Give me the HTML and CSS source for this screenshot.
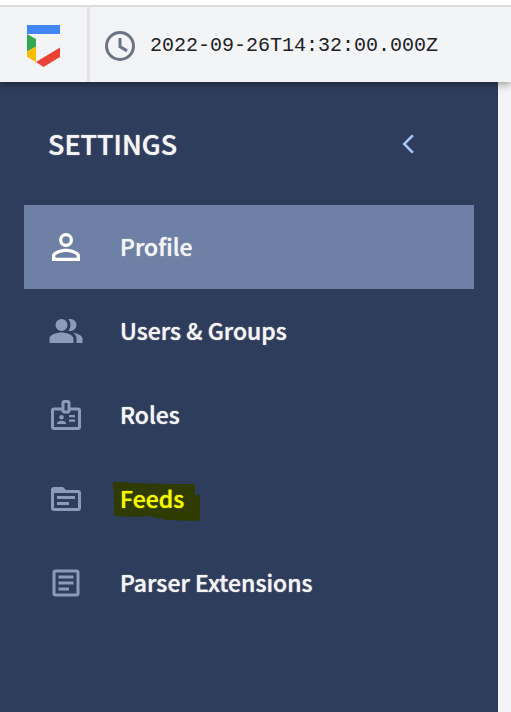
FILE: index.html
```html
<!DOCTYPE html>
<html lang="en">
<head>
<meta charset="utf-8">
<meta name="viewport" content="width=device-width, initial-scale=1">
<title>Settings</title>
<link rel="stylesheet" href="styles.css">
</head>
<body>
<header class="topbar">
  <a class="brand" href="#" aria-label="Home">
    <svg class="logo" viewBox="0 0 33 42" aria-hidden="true">
      <path fill="#4285f4" d="M0 0h33v9H0z"/>
      <path fill="#34a853" d="M0 9l9 5v7.500L0 26.500z"/>
      <path fill="#fbbc04" d="M0 26.500l9-5V37L0 32z"/>
      <path fill="#ea4335" d="M9 37l24-14.500V32L16.500 42z"/>
    </svg>
  </a>
  <div class="clock">
    <svg class="icon" viewBox="0 0 24 24" aria-hidden="true"><path d="M12 2a10 10 0 1 0 0 20 10 10 0 0 0 0-20zm0 18a8 8 0 1 1 0-16 8 8 0 0 1 0 16zM13 6.700H11v6.300l5.200 3.100 1-1.700L13 11.900z"/></svg>
    <time class="stamp" datetime="2022-09-26T14:32:00.000Z">2022-09-26T14:32:00.000Z</time>
  </div>
</header>
<div class="body">
  <aside class="sidebar">
    <div class="heading">
      <h1 class="title">SETTINGS</h1>
      <button class="collapse" type="button" aria-label="Collapse">
        <svg class="icon" viewBox="0 0 24 24" aria-hidden="true"><path d="M15.800 6.900 14.600 5.700 8.300 12l6.300 6.300 1.200-1.200L10.700 12z"/></svg>
      </button>
    </div>
    <nav class="menu">
      <a class="item active" href="#">
        <span class="slot"><svg class="icon large" viewBox="0 0 24 24" aria-hidden="true"><path d="M12 5.900a2.100 2.100 0 1 1 0 4.200 2.100 2.100 0 0 1 0-4.200m0 9c2.970 0 6.100 1.460 6.100 2.100v1.100H5.900V17c0-.64 3.130-2.100 6.100-2.100M12 4a4 4 0 1 0 0 8 4 4 0 0 0 0-8zm0 9c-2.670 0-8 1.340-8 4v3h16v-3c0-2.660-5.330-4-8-4z"/></svg></span>
        <span class="label">Profile</span>
      </a>
      <a class="item" href="#">
        <span class="slot"><svg class="icon" viewBox="0 0 24 24" aria-hidden="true"><path d="M16.670 13.130C18.040 14.060 19 15.320 19 17v3h4v-3c0-2.180-3.570-3.470-6.330-3.870zM15 12a4 4 0 0 0 0-8c-.47 0-.91.1-1.330.24a5.980 5.980 0 0 1 0 7.520c.42.14.86.24 1.330.24zM9 4a4 4 0 1 0 0 8 4 4 0 0 0 0-8zm0 9c-2.670 0-8 1.340-8 4v3h16v-3c0-2.660-5.330-4-8-4z"/></svg></span>
        <span class="label">Users &amp; Groups</span>
      </a>
      <a class="item" href="#">
        <span class="slot"><svg class="icon" viewBox="0 0 24 24" aria-hidden="true"><path fill-rule="evenodd" d="M20 7h-5V4a2 2 0 0 0-2-2h-2a2 2 0 0 0-2 2v3H4a2 2 0 0 0-2 2v11a2 2 0 0 0 2 2h16a2 2 0 0 0 2-2V9a2 2 0 0 0-2-2zM11 4h2v5h-2zm9 16H4V9h5a2 2 0 0 0 2 2h2a2 2 0 0 0 2-2h5z"/><circle cx="9" cy="13.500" r="1.500"/><path d="M6 18v-.5c0-1 1.700-1.700 3-1.700s3 .7 3 1.700v.5zM14 12h4v1.500h-4zM14 15h4v1.500h-4z"/></svg></span>
        <span class="label">Roles</span>
      </a>
      <a class="item" href="#">
        <span class="slot"><svg class="icon" viewBox="0 0 24 24" aria-hidden="true"><path d="M20 6h-8l-2-2H4a2 2 0 0 0-2 2v12a2 2 0 0 0 2 2h16a2 2 0 0 0 2-2V8a2 2 0 0 0-2-2zm0 12H4V8h16zM18 10H6v2h12zM14 14H6v2h8z"/></svg></span>
        <span class="label marked">
          <svg class="marker" viewBox="0 0 87 40" aria-hidden="true"><path d="M0 0h15v1l42 1h25v11h5v26l-32-1-11-2-8-2-13 1-22-1V8H0z"/></svg>
          <span class="marked-text">Feeds</span>
        </span>
      </a>
      <a class="item" href="#">
        <span class="slot"><svg class="icon" viewBox="0 0 24 24" aria-hidden="true"><path d="M19 5v14H5V5h14m0-2H5a2 2 0 0 0-2 2v14a2 2 0 0 0 2 2h14a2 2 0 0 0 2-2V5a2 2 0 0 0-2-2zM14 17H7v-2h7zm3-4H7v-2h10zm0-4H7V7h10z"/></svg></span>
        <span class="label">Parser Extensions</span>
      </a>
    </nav>
  </aside>
</div>
</body>
</html>
```
FILE: styles.css
```css
* { box-sizing: border-box; }

body {
  margin: 0;
  min-height: 100vh;
  display: flex;
  flex-direction: column;
  background: #f3f4f6;
  font-family: "Noto Sans CJK SC", "Noto Sans", sans-serif;
}

.icon {
  display: block;
  width: 36px;
  height: 36px;
  fill: currentColor;
}

.icon.large {
  width: 42px;
  height: 42px;
}

.topbar {
  position: relative;
  z-index: 1;
  display: flex;
  height: 82px;
  border-top: 5px solid #fff;
  background: #f3f4f6;
  box-shadow: 0 2px 8px rgba(0, 0, 0, 0.4);
}

.topbar > * { border-top: 2px solid #dcdcdc; }

.brand {
  display: flex;
  align-items: center;
  justify-content: center;
  width: 90px;
  padding-top: 2px;
  border-right: 3px solid #e3e3e4;
}

.logo {
  display: block;
  width: 33px;
  height: 42px;
}

.clock {
  flex: 1;
  display: flex;
  align-items: center;
  gap: 12px;
  padding: 2px 0 0 12px;
  color: #6b7386;
}

.stamp {
  color: #202124;
  font: 20px/24px "Liberation Mono", monospace;
}

.body {
  flex: 1;
  display: flex;
  padding-right: 13px;
}

.sidebar {
  flex: 1;
  padding: 0 24px;
  background: #2f3d5c;
}

.heading {
  display: flex;
  align-items: center;
  justify-content: space-between;
  height: 123px;
  padding: 0 48px 0 24px;
}

.title {
  margin: 0;
  color: #f3f4f6;
  font-size: 27px;
  font-weight: 500;
  line-height: 36px;
  text-shadow: 0 0 1px currentColor;
}

.collapse {
  padding: 0;
  border: 0;
  background: none;
  color: #a8c7fa;
}

.item {
  display: flex;
  align-items: center;
  height: 84px;
  color: #f3f4f6;
  text-decoration: none;
}

.item.active { background: #6e80a5; }

.slot {
  display: flex;
  justify-content: center;
  width: 84px;
  margin-right: 12px;
  color: #8d9bbb;
}

.active .slot { color: #fff; }

.label {
  padding-bottom: 2px;
  font-size: 23px;
  font-weight: 500;
  line-height: 30px;
  text-shadow: 0 0 1px currentColor;
}

.marked {
  position: relative;
  color: #f4f800;
}

.marked-text { position: relative; }

.marker {
  position: absolute;
  top: -1px;
  left: -7px;
  width: 87px;
  height: 40px;
  fill: #2f3b00;
}
```
